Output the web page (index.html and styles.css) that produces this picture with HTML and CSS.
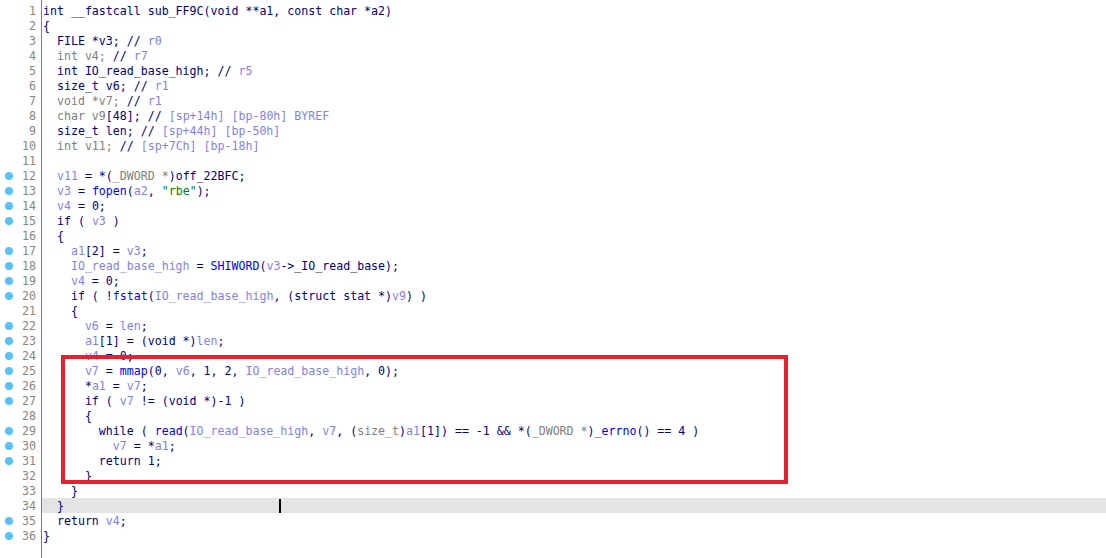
FILE: index.html
```html
<!DOCTYPE html>
<html lang="en">
<head>
    <meta charset="UTF-8">
    <title>Pseudocode-A</title>
    <link rel="stylesheet" href="styles.css">
</head>
<body>
    <div class="view">
        <!-- line numbers + breakpoint dots -->
        <div class="gutter">
            <div class="num">1</div>
            <div class="num">2</div>
            <div class="num">3</div>
            <div class="num">4</div>
            <div class="num">5</div>
            <div class="num">6</div>
            <div class="num">7</div>
            <div class="num">8</div>
            <div class="num">9</div>
            <div class="num">10</div>
            <div class="num">11</div>
            <div class="num dot">12</div>
            <div class="num dot">13</div>
            <div class="num dot">14</div>
            <div class="num dot">15</div>
            <div class="num">16</div>
            <div class="num dot">17</div>
            <div class="num dot">18</div>
            <div class="num dot">19</div>
            <div class="num dot">20</div>
            <div class="num">21</div>
            <div class="num dot">22</div>
            <div class="num dot">23</div>
            <div class="num dot">24</div>
            <div class="num dot">25</div>
            <div class="num dot">26</div>
            <div class="num dot">27</div>
            <div class="num">28</div>
            <div class="num dot">29</div>
            <div class="num dot">30</div>
            <div class="num dot">31</div>
            <div class="num">32</div>
            <div class="num">33</div>
            <div class="num">34</div>
            <div class="num dot">35</div>
            <div class="num dot">36</div>
        </div>

        <!-- decompiled code -->
        <div class="code">
<div class="line">int __fastcall sub_FF9C(void **a1, const char *a2)</div>
<div class="line">{</div>
<div class="line">  FILE *v3; // <span class="v">r0</span></div>
<div class="line">  <span class="g">int v4;</span> // <span class="v">r7</span></div>
<div class="line">  int IO_read_base_high; // <span class="v">r5</span></div>
<div class="line">  size_t v6; // <span class="v">r1</span></div>
<div class="line">  <span class="g">void *v7;</span> // <span class="v">r1</span></div>
<div class="line">  <span class="g">char v9</span>[48]; // <span class="v">[sp+14h] [bp-80h] BYREF</span></div>
<div class="line">  size_t len; // <span class="v">[sp+44h] [bp-50h]</span></div>
<div class="line">  <span class="g">int v11;</span> // <span class="v">[sp+7Ch] [bp-18h]</span></div>
<div class="line"> </div>
<div class="line">  <span class="v">v11</span> = *(<span class="g">_DWORD *</span>)off_22BFC;</div>
<div class="line">  <span class="v">v3</span> = <span class="f">fopen</span>(<span class="v">a2</span>, <span class="s">"rbe"</span>);</div>
<div class="line">  <span class="v">v4</span> = 0;</div>
<div class="line">  if ( <span class="v">v3</span> )</div>
<div class="line">  {</div>
<div class="line">    <span class="v">a1</span>[2] = <span class="v">v3</span>;</div>
<div class="line">    <span class="v">IO_read_base_high</span> = <span class="f">SHIWORD</span>(<span class="v">v3</span>-&gt;_IO_read_base);</div>
<div class="line">    <span class="v">v4</span> = 0;</div>
<div class="line">    if ( !<span class="f">fstat</span>(<span class="v">IO_read_base_high</span>, (struct stat *)<span class="v">v9</span>) )</div>
<div class="line">    {</div>
<div class="line">      <span class="v">v6</span> = <span class="v">len</span>;</div>
<div class="line">      <span class="v">a1</span>[1] = (void *)<span class="v">len</span>;</div>
<div class="line">      <span class="v">v4</span> = 0;</div>
<div class="line">      <span class="v">v7</span> = <span class="f">mmap</span>(0, <span class="v">v6</span>, 1, 2, <span class="v">IO_read_base_high</span>, 0);</div>
<div class="line">      *<span class="v">a1</span> = <span class="v">v7</span>;</div>
<div class="line">      if ( <span class="v">v7</span> != (void *)-1 )</div>
<div class="line">      {</div>
<div class="line">        while ( <span class="f">read</span>(<span class="v">IO_read_base_high</span>, <span class="v">v7</span>, (<span class="g">size_t</span>)<span class="v">a1</span>[1]) == -1 &amp;&amp; *(<span class="g">_DWORD *</span>)<span class="f">_errno</span>() == 4 )</div>
<div class="line">          <span class="v">v7</span> = *<span class="v">a1</span>;</div>
<div class="line">        return 1;</div>
<div class="line">      }</div>
<div class="line">    }</div>
<div class="line current">  }<span class="caret"></span></div>
<div class="line">  return <span class="v">v4</span>;</div>
<div class="line">}</div>
        </div>

        <!-- highlight annotation -->
        <div class="mark"></div>
    </div>
</body>
</html>
```

FILE: styles.css
```css
/* General */
html, body {
    margin: 0;
    padding: 0;
    background: #fff;
    overflow: hidden;
}

.view {
    position: relative;
    display: flex;
    width: 1106px;
    height: 558px;
    font-family: "DejaVu Sans Mono", "Liberation Mono", monospace;
    font-size: 11.6px;
    line-height: 15px;
    color: #000080;
}

/* Gutter */
.gutter {
    width: 41px;
    padding-top: 3px;
    border-right: 1px solid #3f8cd6;
    flex-shrink: 0;
}

.num {
    position: relative;
    height: 15px;
    padding-top: 1px;
    padding-right: 5px;
    box-sizing: border-box;
    text-align: right;
    color: #858585;
}

.num.dot::before {
    content: "";
    position: absolute;
    left: 5px;
    top: 4px;
    width: 8px;
    height: 8px;
    border-radius: 50%;
    background: #56c2f6;
}

/* Code */
.code {
    flex: 1;
    padding-top: 3px;
}

.line {
    position: relative;
    height: 15px;
    padding-left: 1px;
    padding-top: 1px;
    box-sizing: border-box;
    white-space: pre;
}

.line.current {
    background: #e4e4e4;
}

.caret {
    position: absolute;
    left: 237px;
    top: 1px;
    width: 2px;
    height: 14px;
    background: #000;
}

.v { color: #7f7ff0; }
.f { color: #0000ff; }
.g { color: #808080; }
.s { color: #008000; }

/* Red annotation box */
.mark {
    position: absolute;
    left: 61px;
    top: 355px;
    width: 719px;
    height: 121px;
    border: 4px solid #ea1f2b;
}
```
